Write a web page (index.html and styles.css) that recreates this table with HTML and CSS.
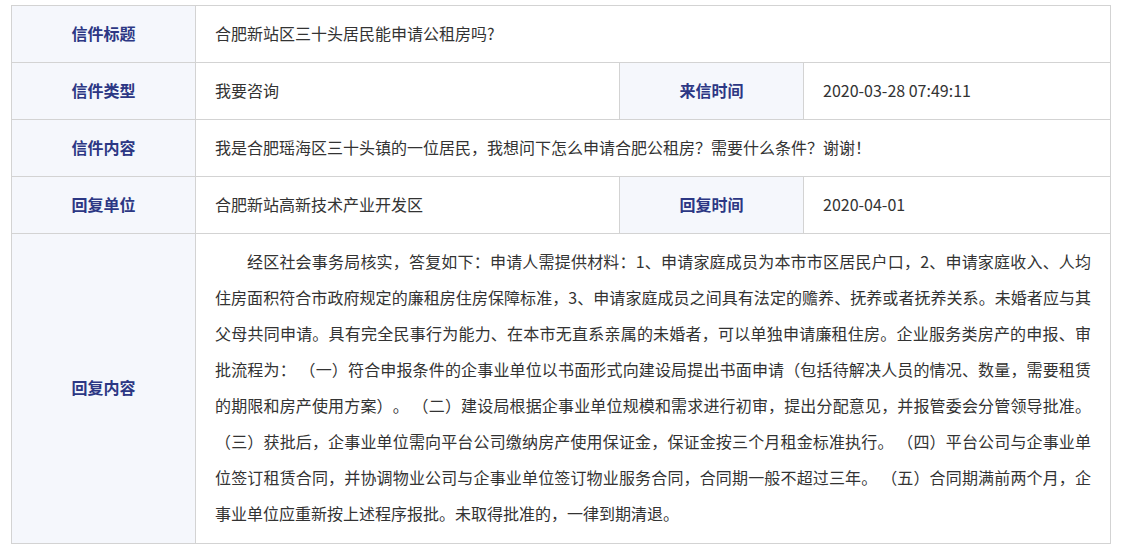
FILE: index.html
```html
<!DOCTYPE html>
<html lang="zh-CN">
<head>
<meta charset="utf-8">
<title>信件详情</title>
<link rel="stylesheet" href="styles.css">
</head>
<body>
<div class="wrap">
<table class="letter">
  <colgroup>
    <col class="c-label">
    <col class="c-val">
    <col class="c-label">
    <col class="c-val2">
  </colgroup>
  <tr class="row">
    <th class="label">信件标题</th>
    <td class="val" colspan="3">合肥新站区三十头居民能申请公租房吗?</td>
  </tr>
  <tr class="row">
    <th class="label">信件类型</th>
    <td class="val">我要咨询</td>
    <th class="label">来信时间</th>
    <td class="val">2020-03-28 07:49:11</td>
  </tr>
  <tr class="row">
    <th class="label">信件内容</th>
    <td class="val" colspan="3">我是合肥瑶海区三十头镇的一位居民，我想问下怎么申请合肥公租房？需要什么条件？谢谢！</td>
  </tr>
  <tr class="row">
    <th class="label">回复单位</th>
    <td class="val">合肥新站高新技术产业开发区</td>
    <th class="label">回复时间</th>
    <td class="val">2020-04-01</td>
  </tr>
  <tr>
    <th class="label">回复内容</th>
    <td class="val reply" colspan="3"><p class="reply-text">经区社会事务局核实，答复如下：申请人需提供材料：1、申请家庭成员为本市市区居民户口，2、申请家庭收入、人均住房面积符合市政府规定的廉租房住房保障标准，3、申请家庭成员之间具有法定的赡养、抚养或者抚养关系。未婚者应与其父母共同申请。具有完全民事行为能力、在本市无直系亲属的未婚者，可以单独申请廉租住房。企业服务类房产的申报、审批流程为： （一）符合申报条件的企事业单位以书面形式向建设局提出书面申请（包括待解决人员的情况、数量，需要租赁的期限和房产使用方案）。 （二）建设局根据企事业单位规模和需求进行初审，提出分配意见，并报管委会分管领导批准。 （三）获批后，企事业单位需向平台公司缴纳房产使用保证金，保证金按三个月租金标准执行。 （四）平台公司与企事业单位签订租赁合同，并协调物业公司与企事业单位签订物业服务合同，合同期一般不超过三年。 （五）合同期满前两个月，企事业单位应重新按上述程序报批。未取得批准的，一律到期清退。</p></td>
  </tr>
</table>
</div>
</body>
</html>
```

FILE: styles.css
```css
html, body {
  margin: 0;
  padding: 0;
  background: #ffffff;
}
.wrap {
  padding: 5px 11px;
}
.letter {
  width: 1099px;
  border-collapse: collapse;
  table-layout: fixed;
  font-family: "Noto Sans CJK SC", "Microsoft YaHei", sans-serif;
  font-size: 16px;
  line-height: 20px;
  color: #333333;
  text-spacing-trim: space-all;
}
.c-label { width: 184px; }
.c-val { width: 424px; }
.c-val2 { width: 307px; }
.letter th, .letter td {
  border: 1px solid #d3d3d3;
}
.row {
  height: 57px;
}
.label {
  background: #f5f7fc;
  color: #2c3784;
  font-weight: bold;
  text-align: center;
  padding: 0 0 3px;
}
.val {
  padding: 0 19px 3px;
  text-align: left;
}
.reply {
  padding: 9px 19px 12px;
}
.reply-text {
  margin: 0;
  text-indent: 2em;
  line-height: 36px;
  text-align: justify;
  text-spacing-trim: space-all;
}
```
